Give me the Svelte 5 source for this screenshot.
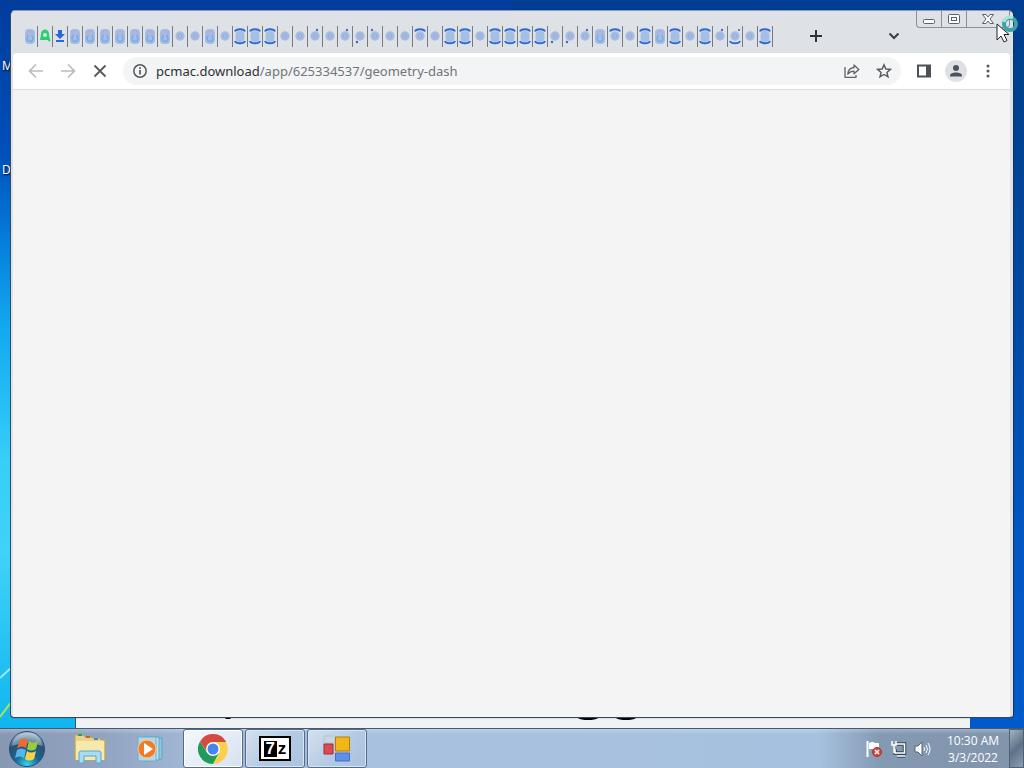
<script>
  const kinds =
    'pill green download pill pill pill pill pill pill pill dot dot pill dot both both both dot dot tr dot tr bl tl dot dot top dot both both dot both both both both bl bl tr pill top dot both pill both dot both tr bottom dot both'.split(' ');
  let url = $state('pcmac.download/app/625334537/geometry-dash');
  const host = $derived(url.split('/')[0]);
  const path = $derived(url.slice(host.length));
</script>

<div class="desktop">
  <span class="shortcut first">M</span>
  <span class="shortcut second">D</span>
  <svg class="streaks" viewBox="0 0 12 70" aria-hidden="true">
    <path d="M0 18 12 7" stroke="#a5e6ff" stroke-width="2" />
    <path d="M0 57 12 41" stroke="#a8e45c" stroke-width="2" />
  </svg>

  <main class="window">
    <div class="tabstrip">
      <div class="tabs">
        {#each kinds as kind, i}
          <button class="tab" aria-label={`Tab ${i + 1}`}>
            <svg viewBox="0 0 14 20" fill="none">
              {#if kind === 'green'}
                <path d="M2 14c0-2 1-3 1-6 0-6 8-6 8 0 0 3 1 4 1 6z" fill="#2fcb70" />
                <circle cx="7" cy="9" r="2" fill="#c5efd5" />
                <path d="m9 12 3 3" stroke="#2fcb70" stroke-width="2" />
              {:else if kind === 'download'}
                <path d="M5 4h4v4h3l-5 5-5-5h3z" fill="#2868dc" />
                <path d="M3 15h8" stroke="#2868dc" stroke-width="2" />
              {:else if kind === 'pill'}
                <rect x="2" y="3" width="10" height="15" rx="4" fill="#9dc0e8" />
                <circle cx="7" cy="7.500" r="2.500" stroke="#b9abdc" stroke-width="1.300" />
                <circle cx="7" cy="12.500" r="3" stroke="#7fa8e0" stroke-width="1.300" />
                <circle cx="7" cy="10" r="1.300" fill="#c3b2e2" />
              {:else if kind === 'both'}
                <rect x="2.500" y="5" width="9" height="11" rx="4" fill="#a3bfe5" />
                <path d="M2 5.500c1-3 9-3 10 0M2 15c1 3 9 3 10 0" stroke="#2d69d2" stroke-width="2" />
              {:else}
                <circle cx="7" cy="10" r="4.700" fill="#a6bce2" />
                <circle cx="7" cy="10" r="2" stroke="#94aed9" />
                {#if kind === 'top'}
                  <path d="M2 5.500c1-3 9-3 10 0" stroke="#2d69d2" stroke-width="2" />
                {:else if kind === 'bottom'}
                  <path d="M2 15c1 3 9 3 10 0" stroke="#2d69d2" stroke-width="2" />
                  <circle cx="11" cy="4" r="1" fill="#3b63bb" />
                {:else if kind === 'tr'}
                  <circle cx="9" cy="4" r="1.200" fill="#4a6fbf" />
                {:else if kind === 'tl'}
                  <circle cx="4" cy="4" r="1.200" fill="#4a6fbf" />
                {:else if kind === 'bl'}
                  <circle cx="4" cy="16" r="1.200" fill="#3e66bd" />
                {/if}
              {/if}
            </svg>
          </button>
        {/each}
      </div>
      <button class="newtab" aria-label="New tab">
        <svg width="12" height="12" viewBox="0 0 12 12"><path d="M6 0v12M0 6h12" stroke="#303236" stroke-width="2" /></svg>
      </button>
      <button class="search" aria-label="Search tabs">
        <svg width="12" height="8" viewBox="0 0 12 8" fill="none"><path d="m1.500 1.500 4.500 4.500 4.500-4.500" stroke="#3c4043" stroke-width="2" /></svg>
      </button>
      <div class="caption">
        <button aria-label="Minimize">
          <svg width="14" height="14" viewBox="0 0 14 14"><rect x="1.500" y="7.500" width="11" height="4" rx="1" fill="#fff" stroke="#5b6070" /></svg>
        </button>
        <button aria-label="Maximize">
          <svg width="14" height="14" viewBox="0 0 14 14" fill="#fff" stroke="#5b6070"><rect x="1.500" y="2.500" width="11" height="9" rx="1" /><rect x="4.500" y="5.500" width="5" height="3" /></svg>
        </button>
        <button class="close" aria-label="Close">
          <svg width="14" height="14" viewBox="0 0 14 14"><path d="M1.500 2.500h3.500l2 2.500 2-2.500h3.500L9 7l3.500 4.500H9L7 9l-2 2.500H1.500L5 7z" fill="#fff" stroke="#5b6070" /></svg>
        </button>
      </div>
    </div>

    <nav class="toolbar">
      <button aria-label="Back">
        <svg width="16" height="16" viewBox="0 0 16 16" fill="none" stroke="#babcbe" stroke-width="1.700"><path d="M15 8H2M8 1.500 1.500 8 8 14.500" /></svg>
      </button>
      <button aria-label="Forward">
        <svg width="16" height="16" viewBox="0 0 16 16" fill="none" stroke="#babcbe" stroke-width="1.700"><path d="M1 8h13M8 1.500 14.500 8 8 14.500" /></svg>
      </button>
      <button aria-label="Stop">
        <svg width="16" height="16" viewBox="0 0 16 16" fill="none" stroke="#55585c" stroke-width="1.800"><path d="m2.500 2.500 11 11m0-11-11 11" /></svg>
      </button>
      <div class="omnibox">
        <button class="info" aria-label="Site information">
          <svg width="16" height="16" viewBox="0 0 16 16" fill="none" stroke="#55585c"><circle cx="8" cy="8" r="6.200" stroke-width="1.500" /><path d="M8 7v4.500M8 4.300V6" stroke-width="1.700" /></svg>
        </button>
        <div class="address">
          <div class="tint" aria-hidden="true">{host}<span>{path}</span></div>
          <input aria-label="Address" spellcheck="false" bind:value={url} />
        </div>
        <button aria-label="Share">
          <svg width="16" height="16" viewBox="0 0 16 16" fill="none" stroke="#5f6368" stroke-width="1.300" stroke-linejoin="round"><path d="M1 4v10.300h11V12" /><path d="M10 2v2.500c-3.500.3-5.800 2.500-6.200 6.500 1.700-2 3.500-2.800 6.200-2.800v2.600L14.800 6.400z" /></svg>
        </button>
        <button aria-label="Bookmark this page">
          <svg width="16" height="16" viewBox="0 0 16 16" fill="none" stroke="#55585c" stroke-width="1.400"><path d="m8 1.800 1.800 4.200 4.600.4-3.500 3 1.100 4.500L8 11.500l-4 2.400 1.100-4.500-3.500-3L6.200 6z" /></svg>
        </button>
      </div>
      <button class="panel" aria-label="Side panel">
        <svg width="16" height="16" viewBox="0 0 16 16"><path d="M1 1.500h14v13H1z" fill="#4d5054" /><path d="M3 3.500h7v9H3z" fill="#fff" /></svg>
      </button>
      <button class="profile" aria-label="Profile">
        <svg width="22" height="22" viewBox="0 0 22 22"><circle cx="11" cy="11" r="11" fill="#dfe1e7" /><circle cx="11" cy="8" r="3" fill="#4c5260" /><path d="M5 16.500v-1c0-4 12-4 12 0v1z" fill="#4c5260" /></svg>
      </button>
      <button aria-label="Menu">
        <svg width="16" height="16" viewBox="0 0 16 16" fill="#55585c"><circle cx="8" cy="3" r="1.500" /><circle cx="8" cy="8" r="1.500" /><circle cx="8" cy="13" r="1.500" /></svg>
      </button>
    </nav>
    <section class="page" aria-label="Page"></section>
  </main>

  <div class="behind" aria-hidden="true">
    <svg width="570" height="4" viewBox="0 0 570 4"><path d="M149 0h6l-1 1h-4zM502 0h20q-3 2-10 2t-10-2M540 0h20q-3 2-10 2t-10-2" /></svg>
  </div>

  <footer class="taskbar">
    <button class="start" aria-label="Start">
      <svg width="38" height="38" viewBox="0 0 38 38">
        <defs>
          <radialGradient id="orb" cx=".5" cy=".95" r=".9"><stop offset="0" stop-color="#34d5ee" /><stop offset=".4" stop-color="#16648f" /><stop offset=".75" stop-color="#2b5270" /><stop offset="1" stop-color="#a5bccd" /></radialGradient>
        </defs>
        <circle cx="19" cy="19" r="17.500" fill="url(#orb)" stroke="#284e71" />
        <path d="M4 16Q6 4 19 3t15 13Q19 10 4 16" fill="#d1e2ed" opacity=".4" />
        <path d="M12 10q4-3 8 0l-2 8q-4-3-9 0z" fill="#ef6b2d" />
        <path d="M21 11q4 3 9 0l-2 8q-5 3-9 0z" fill="#9bcc40" />
        <path d="M9 20q4-3 9 0l-2 8q-4-3-9 0z" fill="#58b5ec" />
        <path d="M19 21q4 3 9 0l-2 8q-5 3-9 0z" fill="#fbd247" />
      </svg>
    </button>
    <button class="pinned" aria-label="Windows Explorer">
      <svg width="34" height="32" viewBox="0 0 34 32">
        <path d="M2 4V2h8l2 2h7v1h7l2 2h4v20H2z" fill="#e9d48a" stroke="#bda35b" />
        <path d="M3 8h28v19H3z" fill="#f6e9aa" />
        <path d="M5 2h4" stroke="#25a348" stroke-width="2" /><path d="M13 4h4" stroke="#d05b37" stroke-width="2" /><path d="M21 6h4" stroke="#3e8bd6" stroke-width="2" />
        <path d="M6 30V20q0-2 2-2h18q2 0 2 2v10h-5v-7H11v7z" fill="#a8dcf2" stroke="#55a7cf" />
      </svg>
    </button>
    <button class="pinned media" aria-label="Windows Media Player">
      <svg width="32" height="30" viewBox="0 0 32 30">
        <path d="M11 4h16v21l-16 2z" fill="#8fc8de" stroke="#5fa5c2" /><path d="M8 3h16v23H8z" fill="#b8e2ee" stroke="#5fa5c2" /><path d="M3 3h18v24H3z" fill="#b3d6e8" stroke="#73aec8" />
        <circle cx="12" cy="15" r="9" fill="#ef7c27" stroke="#fbc59a" /><path d="m9 9 9 6-9 6z" fill="#fff" />
      </svg>
    </button>
    <button class="task active" aria-label="Google Chrome">
      <svg width="30" height="30" viewBox="0 0 30 30">
        <path d="M15 8h13A15 15 0 0 1 15 30l6-11.500z" fill="#fbd04b" />
        <path d="M15 8h13L28 7.500A15 15 0 0 0 2 7.500L9 18z" fill="#d44a40" />
        <path d="M2 7.500 9 18.500q4 5 12 0L15 30A15 15 0 0 1 2 7.500" fill="#209b58" />
        <circle cx="15" cy="15" r="7" fill="#fff" /><circle cx="15" cy="15" r="5.500" fill="#4386ee" />
      </svg>
    </button>
    <button class="task" aria-label="7-Zip">
      <span class="zip"><b>7</b><i>z</i></span>
    </button>
    <button class="task" aria-label="Installer">
      <svg width="28" height="28" viewBox="0 0 28 28">
        <path d="M1 1h11v7H1z" fill="#c8d6e6" stroke="#b5c4d5" />
        <path d="M1 9h9v10H1z" fill="#db4b50" stroke="#a42c35" /><path d="M12.500 2h14v14h-14z" fill="#f2b619" stroke="#b47e0b" /><path d="M12.500 18h14v8h-14z" fill="#5f8fe8" stroke="#4a70bd" />
      </svg>
    </button>
    <div class="tray">
      <svg width="18" height="18" viewBox="0 0 18 18"><path d="M2.500 1v16" stroke="#fff" stroke-width="2" /><path d="M4 3q4-2 6 0h4v6H4z" fill="#fff" /><circle cx="12" cy="12" r="4.500" fill="#d8453e" stroke="#a5302f" /><path d="m10 10 4 4m0-4-4 4" stroke="#fff" stroke-width="1.500" /></svg>
      <svg width="18" height="18" viewBox="0 0 18 18" fill="none"><path d="M7 4h8.500v9H6V9M8 16h8" stroke="#35475c" stroke-width="3.500" /><path d="M7 4h8.500v9H6V9M8 16h8M3 1v4h4V1M5 5v8" stroke="#fff" stroke-width="1.500" /></svg>
      <svg width="18" height="18" viewBox="0 0 18 18" fill="none" stroke="#fff"><path d="M2 6h3l4-4v14l-4-4H2z" fill="#fff" stroke="#52647a" /><path d="M11 7q1 2 0 4M13 5q3 4 0 8M15 3q4 6 0 12" /></svg>
    </div>
    <div class="clock"><time>10:30 AM</time><time>3/3/2022</time></div>
    <button class="show" aria-label="Show desktop"></button>
  </footer>

  <svg class="pointer" width="28" height="32" viewBox="0 0 28 32" aria-hidden="true">
    <circle cx="14" cy="12" r="6" fill="none" stroke="#3ba4a9" stroke-width="4" />
    <path d="M8 10a6 6 0 0 1 9-4" fill="none" stroke="#a9e6d9" stroke-width="3" />
    <path d="M1 12v16l4-4 3 6 3-1.500-3-6h5z" fill="#fff" stroke="#20242a" />
  </svg>
</div>

<style>
  :global(body) { margin: 0; }
  * { box-sizing: border-box; }
  button { border: 0; padding: 0; background: none; display: flex; align-items: center; justify-content: center; flex: none; }
  svg { display: block; flex: none; }
  .desktop {
    position: relative; min-height: 100vh; display: flex; flex-direction: column; overflow: hidden;
    font-family: "Noto Sans", "Open Sans", sans-serif;
    background:
      linear-gradient(#003c9c 0, #0050bb 20%, #0680dc 32%, #12aaf0 43%, #36cff8 60%, #3ed3f8 72%, #10b5ee 95%) left / 50% 100% no-repeat,
      linear-gradient(#003d93 0, #00418c 10%, #0049a4 40%, #0058c3 70%, #005acb 100%);
  }
  .shortcut { position: absolute; left: 2px; color: #fff; font-size: 12px; line-height: 16px; text-shadow: 1px 1px 2px #000; }
  .first { top: 58px; }
  .second { top: 162px; }
  .streaks { position: absolute; left: 0; bottom: 38px; width: 12px; height: 70px; }
  .window {
    position: relative; flex: 1; display: flex; flex-direction: column; margin: 10px 11px 0 10px;
    padding: 0 2px; background: #dee1e6; border: 1px solid #34495f; border-top-color: #8a9bb0; border-right-color: #dfe3ec;
    border-radius: 5px 5px 4px 4px; box-shadow: 1px 0 1px #123462;
  }
  .tabstrip { height: 42px; display: flex; align-items: center; padding-left: 10px; }
  .tabs { display: flex; margin-top: 8px; }
  .tab { width: 15px; height: 21px; border-right: 1px solid #777b80; }
  .tab svg { width: 14px; height: 20px; }
  .newtab { width: 28px; height: 28px; margin: 8px 0 0 29px; }
  .search { width: 28px; height: 28px; margin: 8px 0 0 auto; }
  .caption { display: flex; align-self: flex-start; height: 17px; margin-left: 8px; border: 1px solid #8c929d; border-top: 0; border-radius: 0 0 4px 4px; }
  .caption button { width: 25px; border-right: 1px solid #8c929d; }
  .caption .close { width: 42px; border: 0; }
  .toolbar { height: 37px; display: flex; align-items: center; gap: 16px; padding: 0 14px 0 15px; background: #fff; border-bottom: 1px solid #dadce0; border-radius: 4px 4px 0 0; }
  .omnibox { flex: 1; display: flex; align-items: center; gap: 16px; height: 28px; margin-left: -1px; padding: 0 9px; border-radius: 14px; background: #f3f4f5; }
  .info { margin-right: -8px; }
  .address { flex: 1; display: grid; font-size: 13px; line-height: 20px; }
  .address > * { grid-area: 1 / 1; }
  .tint { color: #2d3033; white-space: pre; }
  .tint span { color: #70757a; }
  input { width: 100%; border: 0; padding: 0; outline: 0; background: none; color: transparent; caret-color: #202124; font: inherit; }
  .panel { margin-left: -1px; }
  .profile { margin: 0 -3px; }
  .page { flex: 1; background: #f4f4f4; }
  .behind { height: 10px; margin: 0 54px 0 75px; background: #f0f2f4; border-left: 1px solid #24577b; }
  .taskbar {
    position: relative; height: 40px; display: flex; align-items: center; border-top: 1px solid #435a76;
    background: linear-gradient(#ffffff40, #ffffff00 5px), linear-gradient(90deg, #8798b3 0, #91a4c1 10%, #a0b6d4 18%, #a8c1de 35%, #a6c1df 80%, #8499b2 86%, #8194ac 100%);
  }
  .start { width: 54px; }
  .pinned { width: 62px; margin-left: 5px; }
  .media { margin-left: -1px; }
  .task { width: 60px; height: 39px; margin-left: 2px; border: 1px solid #536b88; border-radius: 3px; background: linear-gradient(135deg, #d5e1ee, #b4cae3 55%, #a9c3df); box-shadow: inset 0 0 0 1px #d9e5f2; }
  .active { margin-left: 1px; background: linear-gradient(135deg, #f5f8fc, #d6e1ef); box-shadow: inset 0 0 0 1px #fff; }
  .zip { width: 32px; height: 25px; display: flex; align-items: center; justify-content: center; gap: 1px; border: 2px solid #000; background: #fff; color: #000; font: bold 17px/16px "Liberation Sans", sans-serif; }
  .zip b { width: 13px; background: #000; color: #fff; }
  .zip i { font-style: normal; }
  .tray { display: flex; gap: 6px; margin: 0 6px 0 auto; }
  .clock { width: 72px; display: flex; flex-direction: column; align-items: center; color: #fff; font-family: "Open Sans", "Noto Sans", sans-serif; font-size: 12px; line-height: 17px; }
  .show { width: 15px; height: 39px; border: 1px solid #4d6076; background: linear-gradient(135deg, #a5b2c1, #5d7288 50%, #8b9eb2); }
  .pointer { position: absolute; right: 0; top: 12px; }
</style>
